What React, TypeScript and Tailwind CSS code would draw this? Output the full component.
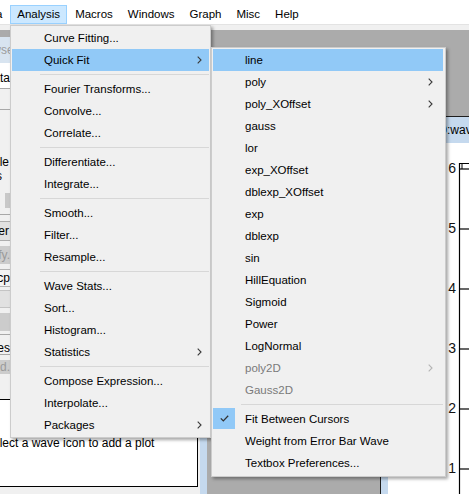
import clsx from 'clsx';

type Entry =
  | 'sep'
  | { label: string; sub?: boolean; active?: boolean; disabled?: boolean; checked?: boolean };

const analysisItems: Entry[] = [
  { label: 'Curve Fitting...' },
  { label: 'Quick Fit', sub: true, active: true },
  'sep',
  { label: 'Fourier Transforms...' },
  { label: 'Convolve...' },
  { label: 'Correlate...' },
  'sep',
  { label: 'Differentiate...' },
  { label: 'Integrate...' },
  'sep',
  { label: 'Smooth...' },
  { label: 'Filter...' },
  { label: 'Resample...' },
  'sep',
  { label: 'Wave Stats...' },
  { label: 'Sort...' },
  { label: 'Histogram...' },
  { label: 'Statistics', sub: true },
  'sep',
  { label: 'Compose Expression...' },
  { label: 'Interpolate...' },
  { label: 'Packages', sub: true },
];

const quickFitItems: Entry[] = [
  { label: 'line', active: true },
  { label: 'poly', sub: true },
  { label: 'poly_XOffset', sub: true },
  { label: 'gauss' },
  { label: 'lor' },
  { label: 'exp_XOffset' },
  { label: 'dblexp_XOffset' },
  { label: 'exp' },
  { label: 'dblexp' },
  { label: 'sin' },
  { label: 'HillEquation' },
  { label: 'Sigmoid' },
  { label: 'Power' },
  { label: 'LogNormal' },
  { label: 'poly2D', sub: true, disabled: true },
  { label: 'Gauss2D', disabled: true },
  'sep',
  { label: 'Fit Between Cursors', checked: true },
  { label: 'Weight from Error Bar Wave' },
  { label: 'Textbox Preferences...' },
];

function Chevron({ dim }: { dim?: boolean }) {
  return (
    <svg width="5" height="8" viewBox="0 0 5 8" className="shrink-0">
      <path d="M0.7 0.7 L4 4 L0.7 7.3" fill="none" stroke={dim ? '#b4b4b4' : '#3a3a3a'} strokeWidth="1.1" />
    </svg>
  );
}

function Menu({ items, arrowPad }: { items: Entry[]; arrowPad: string }) {
  return (
    <>
      {items.map((it, i) =>
        it === 'sep' ? (
          <div key={i} className="flex h-[7px] items-center pl-[28px]">
            <div className="h-px w-full bg-[#d7d7d7]" />
          </div>
        ) : (
          <div
            key={i}
            className={clsx(
              'flex h-[22px] items-center whitespace-nowrap',
              arrowPad,
              it.active && 'bg-[#91c9f7]',
              it.disabled ? 'text-[#7a7a7a]' : 'text-black'
            )}
          >
            <div className="flex h-full w-[32px] shrink-0 items-start">
              {it.checked && (
                <div className="flex h-[21px] w-[22px] items-center justify-center bg-[#91c9f7]">
                  <svg width="9" height="7" viewBox="0 0 9 7">
                    <path d="M0.8 3.4 L3.3 5.9 L8.2 0.8" fill="none" stroke="#333" strokeWidth="1.3" />
                  </svg>
                </div>
              )}
            </div>
            <span className="flex-1 pt-px">{it.label}</span>
            {it.sub && <Chevron dim={it.disabled} />}
          </div>
        )
      )}
    </>
  );
}

const topMenus = ['Data', 'Analysis', 'Macros', 'Windows', 'Graph', 'Misc', 'Help'];

export default function App() {
  return (
    <div className="relative h-[494px] w-[469px] overflow-hidden bg-[#ababab] font-['Liberation_Sans',Arial,sans-serif] text-[11.5px] text-black">
      {/* menu bar */}
      <div className="flex h-[24px] items-end bg-white">
        <div className="ml-[-29px] flex gap-[1px]">
          {topMenus.map((m) => (
            <div
              key={m}
              className={clsx(
                'flex h-[19px] items-center border px-[6px] pt-px',
                m === 'Analysis' ? 'border-[#99d1ff] bg-[#cce8ff]' : 'border-transparent'
              )}
            >
              {m}
            </div>
          ))}
        </div>
      </div>
      <div className="h-[6px] border-t border-[#e3e3e3] bg-[#f0f0f0]" />

      {/* MDI workspace */}
      <div className="relative h-[464px]">
        {/* Data Browser window (mostly under the menu) */}
        <div className="absolute left-[-60px] top-[7px] flex h-[480px] w-[267px] flex-col bg-[#c5d9ee] pl-[7px] pr-[7px]">
          <div className="-mx-[7px] flex h-[26px] items-center bg-[#d8e4f0] pl-[5px] text-[12px] text-[#9c9c9c]">
            Data Browser
          </div>
          <div className="flex flex-1 flex-col bg-[#f0f0f0] text-[12px]">
            <div className="flex h-[26px] w-[64px] items-end justify-end border-b border-[#a8a8a8] bg-white pb-[1px] pr-[1px]">
              Data
            </div>
            <div className="h-[21px] w-[64px] border-b border-[#a8a8a8]" />
            <div className="flex h-[105px] w-[64px] flex-col items-end border-b border-[#a8a8a8] pr-[2px] pt-[45px] leading-[14px]">
              <span>Variable</span>
              <span className="pr-[7px]">Strings</span>
              <div className="mr-[-1px] mt-[10px] h-[15px] w-[5px] bg-[#c8c8c8]" />
            </div>
            <div className="mt-[6px] flex h-[20px] w-[64px] items-center justify-end border border-[#adadad] bg-[#e1e1e1] pr-[1px]">
              Filter
            </div>
            <div className="mt-[5px] flex h-[18px] w-[64px] items-center justify-end bg-[#cccccc] pr-[1px] text-[#9a9a9a]">
              Modify.
            </div>
            <div className="mt-[5px] flex h-[18px] w-[64px] items-center justify-end border border-[#b4b4b4] bg-[#f4f4f4] pr-0">
              Excp
            </div>
            <div className="mt-[3px] h-[18px] w-[64px] border border-[#c4c4c4] bg-[#e1e1e1]" />
            <div className="mt-[5px] h-[18px] w-[64px] bg-[#cccccc]" />
            <div className="mt-[3px] h-px w-[64px] bg-[#a8a8a8]" />
            <div className="mt-[6px] flex h-[14px] w-[64px] items-center justify-end border-b border-[#a8a8a8] pr-[1px]">
              Types
            </div>
            <div className="mt-[5px] flex h-[14px] w-[64px] items-center justify-end bg-[#cccccc] pr-[1px] text-[#9a9a9a]">
              Add.
            </div>
            <div className="mr-[2px] mt-[25px] h-[88px] border border-black bg-white pl-[37px] pt-[36px] leading-[14px] whitespace-nowrap">
              Select a wave icon to add a plot
            </div>
          </div>
        </div>

        {/* Graph window */}
        <div className="absolute left-[380px] top-[86px] flex h-[400px] w-[220px] flex-col border-l border-t border-[#1e1e1e] bg-[#c5d9ee] pl-[7px]">
          <div className="-ml-[7px] flex h-[26px] items-center bg-[#c5d9ee] pl-[26px] text-[12px] whitespace-nowrap">
            Graph0:wave0
          </div>
          <div className="flex-1 bg-white">
            <svg width="100" height="360" viewBox="0 0 100 360" className="block">
              <line x1="71.5" y1="20" x2="71.5" y2="360" stroke="#000" strokeWidth="1.2" />
              <line x1="71.5" y1="20.5" x2="100" y2="20.5" stroke="#000" strokeWidth="1" />
              <line x1="74" y1="20" x2="74" y2="26" stroke="#000" strokeWidth="1" />
              {[26, 86, 146, 206, 266, 326].map((y, i) => (
                <g key={y}>
                  <line x1="71.5" y1={y} x2="100" y2={y} stroke="#000" strokeWidth="1.2" />
                  <text
                    x="68"
                    y={y - 1}
                    textAnchor="end"
                    dominantBaseline="central"
                    fontSize="14"
                    fontFamily="'Liberation Sans', Arial, sans-serif"
                    fill="#111"
                  >
                    {6 - i}
                  </text>
                </g>
              ))}
            </svg>
          </div>
        </div>
      </div>

      {/* Analysis menu */}
      <div className="absolute left-[10px] top-[25px] z-10 w-[201px] border border-[#cccccc] bg-[#f0f0f0] px-[1px] py-[1px] shadow-[2px_2px_3px_rgba(0,0,0,0.35)]">
        <Menu items={analysisItems} arrowPad="pr-[7px]" />
      </div>

      {/* Quick Fit submenu */}
      <div className="absolute left-[211px] top-[47px] z-20 w-[235px] border border-[#cccccc] bg-[#f0f0f0] pb-[2px] pl-[1px] pr-[2px] pt-[1px] shadow-[2px_2px_3px_rgba(0,0,0,0.35)]">
        <Menu items={quickFitItems} arrowPad="pr-[10px]" />
      </div>
    </div>
  );
}
